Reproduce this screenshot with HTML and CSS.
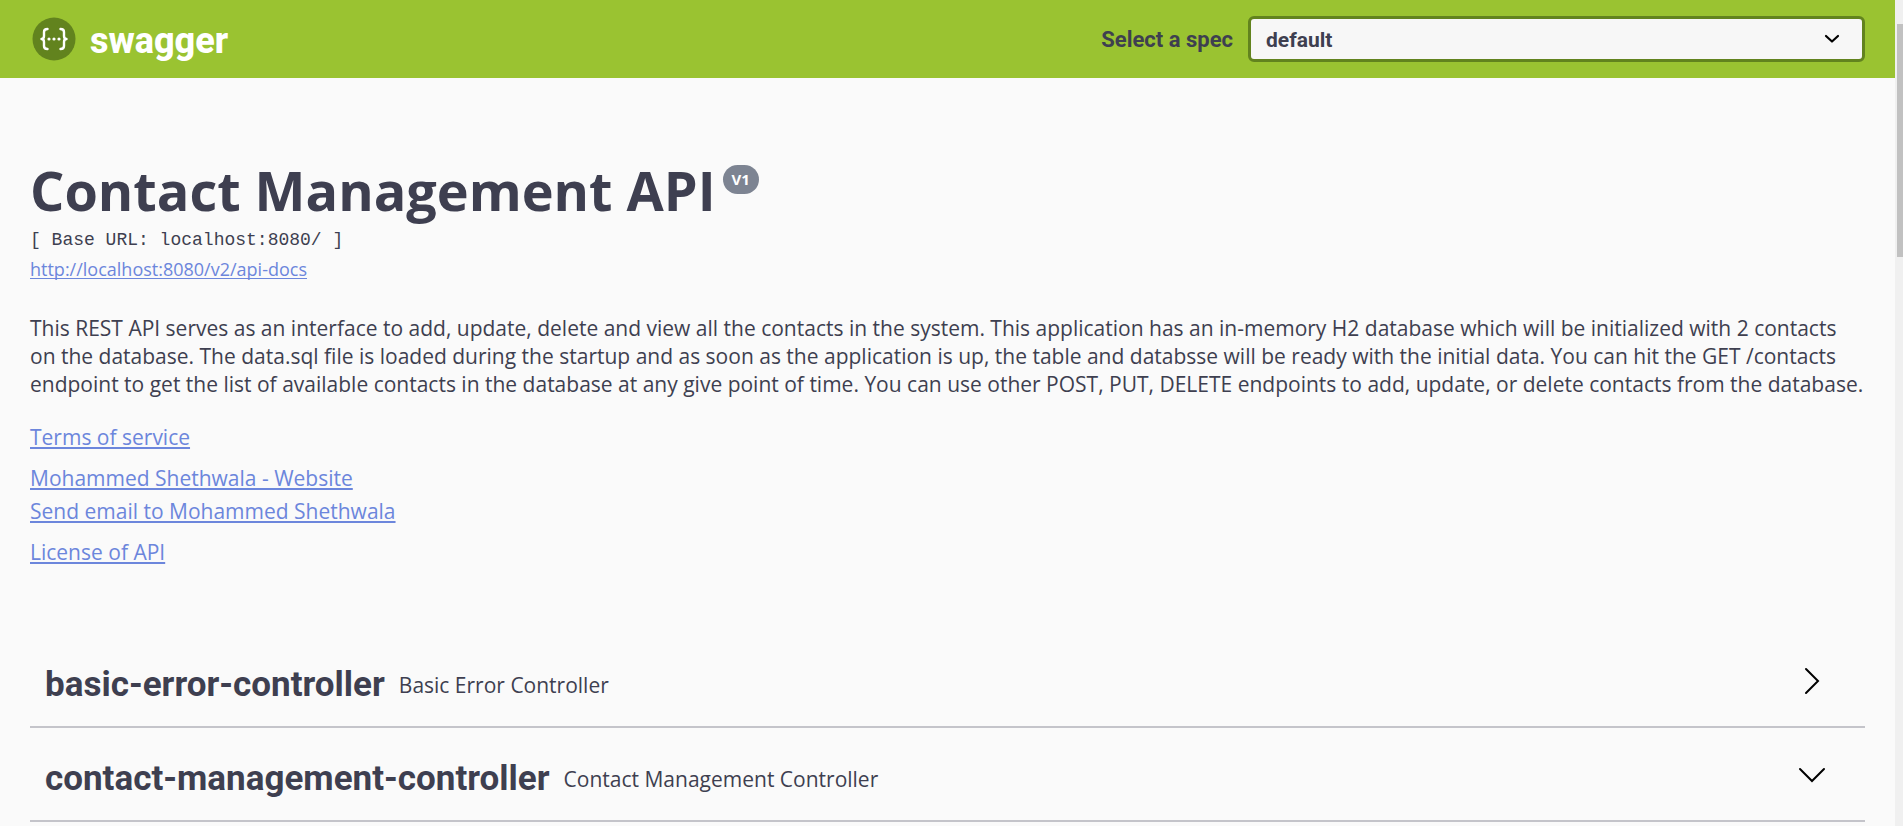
FILE: index.html
```html
<!DOCTYPE html>
<html lang="en">
<head>
<meta charset="utf-8">
<title>Swagger UI</title>
<link rel="stylesheet" href="styles.css">
</head>
<body>
<div class="viewport">
  <div class="page">
    <header class="topbar">
      <a class="brand" href="#">
        <svg class="brand-mark" viewBox="0 0 44 44" aria-hidden="true">
          <circle cx="22" cy="22" r="21.5" fill="#62831e"/>
          <g fill="none" stroke="#fff" stroke-width="2.4" stroke-linecap="round" stroke-linejoin="round">
            <path d="M15.5 12c-2.600 0-3.500.9-3.500 3v4c0 2-.6 3-2.500 3 1.900 0 2.500 1 2.500 3v4c0 2.100.9 3 3.500 3"/>
            <path d="M28.500 12c2.600 0 3.500.9 3.500 3v4c0 2 .6 3 2.500 3-1.900 0-2.500 1-2.500 3v4c0 2.100-.9 3-3.500 3"/>
          </g>
          <g fill="#fff"><circle cx="17" cy="22" r="1.600"/><circle cx="22" cy="22" r="1.600"/><circle cx="27" cy="22" r="1.600"/></g>
        </svg>
        <span class="brand-name">swagger</span>
      </a>
      <div class="spec">
        <label class="spec-label" for="spec">Select a spec</label>
        <div class="spec-field">
          <select class="spec-select" id="spec"><option>default</option></select>
          <svg class="spec-arrow" viewBox="0 0 16 10" aria-hidden="true"><path d="M2 2l6 5.500L14 2" fill="none" stroke="#000" stroke-width="2.200" stroke-linecap="round" stroke-linejoin="round"/></svg>
        </div>
      </div>
    </header>
    <main class="content">
      <section class="info">
        <div class="heading">
          <h1 class="title">Contact Management API</h1>
          <span class="version">V1</span>
        </div>
        <pre class="base-url">[ Base URL: localhost:8080/ ]</pre>
        <a class="link docs-link" href="#">http://localhost:8080/v2/api-docs</a>
        <p class="description">This REST API serves as an interface to add, update, delete and view all the contacts in the system. This application has an in-memory H2 database which will be initialized with 2 contacts on the database. The data.sql file is loaded during the startup and as soon as the application is up, the table and databsse will be ready with the initial data. You can hit the GET /contacts endpoint to get the list of available contacts in the database at any give point of time. You can use other POST, PUT, DELETE endpoints to add, update, or delete contacts from the database.</p>
        <div class="links">
          <a class="link" href="#">Terms of service</a>
          <div class="contact">
            <a class="link" href="#">Mohammed Shethwala - Website</a>
            <a class="link" href="#">Send email to Mohammed Shethwala</a>
          </div>
          <a class="link" href="#">License of API</a>
        </div>
      </section>
      <section class="tags">
        <div class="tag">
          <h2 class="tag-name">basic-error-controller</h2>
          <span class="tag-text">Basic Error Controller</span>
          <button class="toggle" type="button" aria-label="Expand basic-error-controller">
            <svg class="toggle-icon" viewBox="0 0 30 30" aria-hidden="true"><path d="M9 3l12 12L9 27" fill="none" stroke="#000" stroke-width="2" stroke-linecap="round"/></svg>
          </button>
        </div>
        <div class="tag">
          <h2 class="tag-name">contact-management-controller</h2>
          <span class="tag-text">Contact Management Controller</span>
          <button class="toggle" type="button" aria-label="Collapse contact-management-controller">
            <svg class="toggle-icon" viewBox="0 0 30 30" aria-hidden="true"><path d="M3 9l12 12L27 9" fill="none" stroke="#000" stroke-width="2" stroke-linecap="round"/></svg>
          </button>
        </div>
      </section>
    </main>
  </div>
  <div class="scrollbar" aria-hidden="true"><div class="scroll-thumb"></div></div>
</div>
</body>
</html>
```
FILE: styles.css
```css
* { box-sizing: border-box; }
body {
  margin: 0;
  background: #fafafa;
  color: #3e3f50;
  font-family: "Open Sans", sans-serif;
  font-size: 21px;
  line-height: 28px;
}
.viewport {
  display: grid;
  grid-template-columns: minmax(0, 1fr) 8px;
  min-height: 100vh;
}
.topbar {
  display: flex;
  align-items: center;
  justify-content: space-between;
  padding: 16px 30px;
  background: #9ac331;
}
.brand {
  display: flex;
  align-items: center;
  gap: 14px;
  padding-left: 2px;
  color: #fff;
  text-decoration: none;
}
.brand-mark { width: 44px; height: 44px; }
.brand-name {
  padding-top: 4px;
  font-family: Roboto, sans-serif;
  font-size: 36px;
  font-weight: 800;
  line-height: 42px;
}
.spec {
  display: flex;
  align-items: center;
  gap: 15px;
}
.spec-label {
  padding-top: 2px;
  font-family: Roboto, sans-serif;
  font-size: 22px;
  font-weight: 700;
}
.spec-field {
  display: grid;
  align-items: center;
  width: 617px;
}
.spec-select {
  grid-area: 1 / 1;
  width: 100%;
  height: 46px;
  padding: 2px 15px 0;
  border: 3px solid #62831e;
  border-radius: 6px;
  background: #f7f7f7;
  color: #3e3f50;
  font-family: Roboto, sans-serif;
  font-size: 21px;
  font-weight: 700;
  appearance: none;
}
.spec-arrow {
  grid-area: 1 / 1;
  justify-self: end;
  width: 16px;
  height: 10px;
  margin-right: 25px;
  pointer-events: none;
}
.content { padding: 82px 30px 4px; }
.heading {
  display: flex;
  align-items: flex-start;
  gap: 7px;
}
.title {
  margin: 0;
  font-size: 54px;
  font-weight: 700;
  line-height: 60px;
}
.version {
  margin-top: 5px;
  padding: 0 9px;
  border-radius: 15px;
  background: #7d8492;
  color: #fff;
  font-size: 15px;
  font-weight: 700;
  line-height: 29px;
}
.base-url {
  margin: 8px 0 5px;
  font-family: "Liberation Mono", monospace;
  font-size: 18px;
  line-height: 24px;
}
.link {
  display: block;
  width: fit-content;
  color: #6c86dc;
  text-decoration-thickness: 2px;
  text-underline-offset: 2px;
  text-decoration-skip-ink: none;
}
.docs-link {
  font-size: 18px;
  line-height: 24px;
  text-decoration-thickness: 1px;
}
.description { margin: 33px 0 25px; }
.links { display: grid; gap: 13px; }
.contact { display: grid; gap: 5px; }
.tags { margin-top: 68px; }
.tag {
  display: flex;
  align-items: center;
  gap: 14px;
  height: 94px;
  padding: 10px 38px 0 15px;
  border-bottom: 2px solid #c4c4ca;
}
.tag-name {
  margin: 0;
  font-family: Roboto, sans-serif;
  font-size: 35px;
  font-weight: 700;
  line-height: 42px;
}
.toggle {
  display: flex;
  margin: 0 0 8px auto;
  padding: 0;
  border: 0;
  background: none;
}
.toggle-icon { width: 30px; height: 30px; }
.scrollbar {
  padding: 24px 0 0 2px;
  background: #f0f0f0;
}
.scroll-thumb { height: 233px; background: #c1c1c1; }
```
